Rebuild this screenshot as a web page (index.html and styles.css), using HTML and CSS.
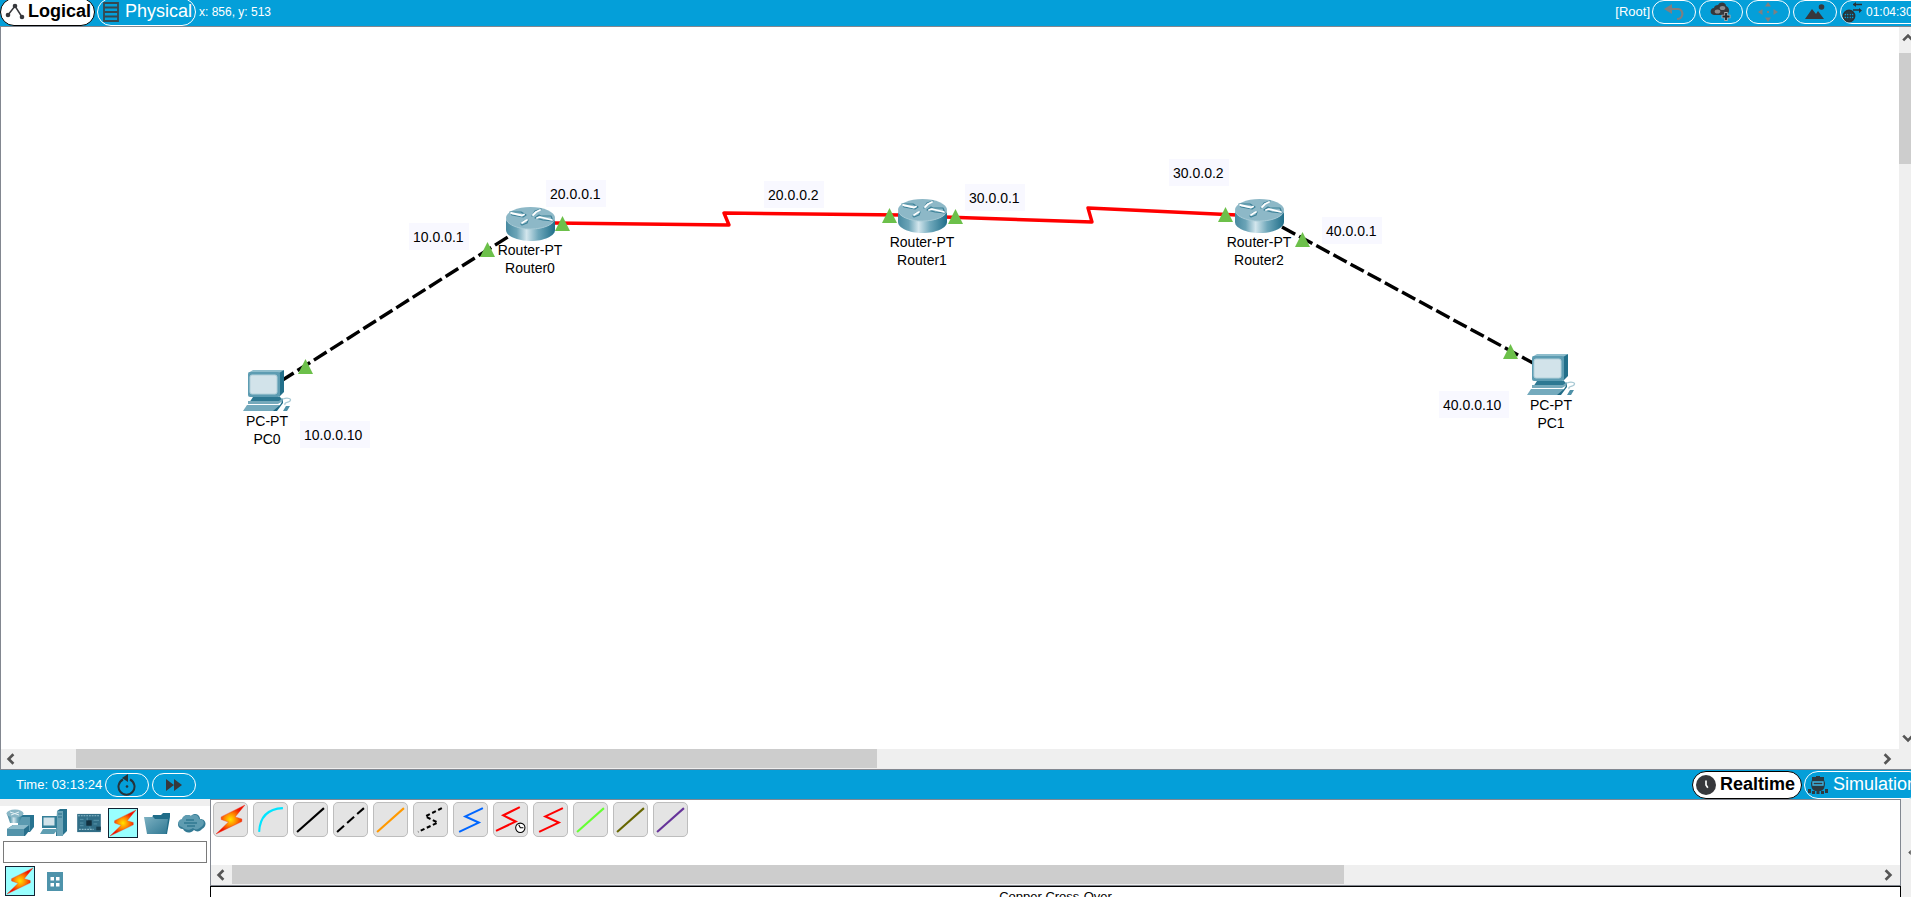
FILE: index.html
```html
<!DOCTYPE html>
<html lang="en">
<head>
<meta charset="utf-8">
<title>Network topology</title>
<link rel="stylesheet" href="styles.css">
</head>
<body>
<svg class="defs" aria-hidden="true">
  <defs>
    <linearGradient id="side" x1="0" x2="1" y1="0" y2="0">
      <stop offset="0" stop-color="#4789a0"/><stop offset=".22" stop-color="#6ba4b7"/><stop offset=".42" stop-color="#d3e6ed"/><stop offset=".66" stop-color="#6ea7ba"/><stop offset="1" stop-color="#216f8a"/>
    </linearGradient>
    <linearGradient id="teal" x1="0" x2="1" y1="0" y2="1">
      <stop offset="0" stop-color="#7db1c2"/><stop offset="1" stop-color="#2f7893"/>
    </linearGradient>
    <radialGradient id="fire">
      <stop offset="0" stop-color="#ffe600"/><stop offset=".4" stop-color="#ff8c00"/><stop offset=".9" stop-color="#f01000"/>
    </radialGradient>
    <symbol id="router" viewBox="0 0 49 34">
      <path d="M0 11v12c0 6 11 11 24.500 11S49 29 49 23V11z" fill="url(#side)"/>
      <ellipse cx="24.500" cy="11" rx="24.500" ry="11" fill="#8db8c7"/>
      <path d="M0 11c0 6 11 11 24.500 11S49 17 49 11" fill="none" stroke="#a9cbd6"/>
      <g fill="none" stroke-linecap="round" stroke-linejoin="round">
        <path d="M4 5h11l5 3-3 2-11-2zM29 11l4-3 2 1h10l2 5-10-1zM26 9l3-5 6-2M15 17l3-3 4-1-1 3-5 2z" stroke="#3c8198" stroke-width="1.200"/>
        <path d="M5 6l11 2.500 2-1M31 11l3-1 12 3M27 8l3-3 4-2M16 16l3-2 2-1" stroke="#fff" stroke-width="1.800"/>
      </g>
    </symbol>
    <symbol id="pc" viewBox="0 0 49 41">
      <path d="M5 3l5-3h31l-4 3z" fill="#8ebdcc"/><path d="M36 3l5-3v22l-5 5z" fill="#226f8a"/>
      <rect x="5" y="2" width="32" height="25" rx="2" fill="#5d9cb2"/>
      <rect x="7" y="5" width="27" height="19" rx="2" fill="#d2e3ea" stroke="#b2d0da"/>
      <path d="M10 27h27l3 3-4 3H6z" fill="#2d7892"/><path d="M5 31h31l4-3v3l-5 3H5z" fill="#75a9bb"/>
      <path d="M4 35h33l-4 6H0z" fill="#74aabd"/><path d="M37 35l3-5v3l-6 8h-4z" fill="#1f6a85"/>
      <path d="M40 29c5-2 9 0 7 2-2 2-6 1-5 4" fill="none" stroke="#a8c9d4" stroke-width="1.300"/><path d="M43 36h4l-3 5h-4z" fill="#4f91a8"/>
    </symbol>
    <symbol id="bolt" viewBox="0 0 30 30">
      <path d="M29 1L6 12.500v2.500l7 2.500L1 29l25-12v-2.500L19.500 12.500z" fill="url(#fire)" stroke="#f03020" stroke-width=".4"/>
    </symbol>
    <symbol id="chev" viewBox="0 0 10 10"><path d="M7 1L3 5l4 4" fill="none" stroke="#555" stroke-width="2.200"/></symbol>
  </defs>
</svg>

<div class="app">
  <header class="bar topbar">
    <button class="tab tab-active tab-logical" type="button">
      <svg width="20" height="18" viewBox="0 0 20 18"><path d="M3 12L10 3l7 11" fill="none" stroke="#37383c" stroke-width="1.500"/><circle cx="3" cy="12" r="2.300" fill="#37383c"/><circle cx="10" cy="3" r="2.300" fill="#37383c"/><circle cx="17" cy="14" r="2.300" fill="#37383c"/></svg>
      Logical
    </button>
    <button class="tab tab-physical" type="button">
      <svg width="16" height="20" viewBox="0 0 16 20"><path d="M1 1h14v18H1zM1 5.500h14M1 10h14M1 14.500h14" fill="none" stroke="#37484f" stroke-width="1.800"/></svg>
      Physical
    </button>
    <span class="coords">x: 856, y: 513</span>
    <div class="top-actions">
      <span class="root">[Root]</span>
      <button class="pill" type="button" aria-label="Back"><svg width="22" height="18" viewBox="0 0 22 18"><path d="M7 6h8c6 0 6 10-1 10" fill="none" stroke="#7f7f80" stroke-width="2.200"/><path d="M1 6l8-5v10z" fill="#7f7f80"/></svg></button>
      <button class="pill" type="button" aria-label="New cluster"><svg width="22" height="20" viewBox="0 0 22 20"><path d="M4 13c-5-1-4-7 0-7 0-2 2-3 4-3 2-4 8-3 8 1 4 1 4 8 0 9z" fill="#37383c"/><g fill="#8c8c8e"><ellipse cx="7.500" cy="9.500" rx="2.800" ry="2"/><ellipse cx="12.500" cy="6" rx="2.800" ry="2"/></g><path d="M16 10v9M11.500 14.500h9" stroke="#a9a9aa" stroke-width="3.500"/><path d="M16 11v7M12.500 14.500h7" stroke="#26272a" stroke-width="1.800"/></svg></button>
      <button class="pill" type="button" aria-label="Move object"><svg width="20" height="20" viewBox="0 0 20 20"><path d="M10 0l3 4.500H7zM10 20l3-4.500H7zM0 10l4.500-3v6zM20 10l-4.500-3v6zM9 9h2v2H9z" fill="#7f7f80"/></svg></button>
      <button class="pill" type="button" aria-label="Background"><svg width="20" height="18" viewBox="0 0 20 18"><path d="M0 16L7 6l4 5 2-3 6 8z" fill="#37383c"/><circle cx="16.500" cy="4" r="2.800" fill="#37383c"/></svg></button>
      <button class="pill pill-clock" type="button"><svg width="21" height="22" viewBox="0 0 21 22"><circle cx="7" cy="15" r="5.500" fill="none" stroke="#2b3135" stroke-width="1.800"/><ellipse cx="7" cy="15" rx="2.500" ry="5.500" fill="none" stroke="#2b3135"/><path d="M1 15h12M2 12h10M2 18h10M7 9v12M20 3.500h-9M11 9h7" stroke="#2b3135" stroke-width="1.400"/><path d="M11 3.500l3-2.500v5zM20 9.500l-3-2.500v5z" fill="#2b3135"/></svg>01:04:30</button>
    </div>
  </header>

  <main class="workspace">
    <div class="canvas">
      <svg class="links" width="100%" height="100%">
        <g fill="none" stroke="#f00" stroke-width="3.400" stroke-linejoin="round">
          <path d="M552 196L728 198 723 186 900 188"/><path d="M943 190L1091 195 1087 181 1236 188"/>
        </g>
        <g fill="none" stroke="#000" stroke-width="3.400" stroke-dasharray="15 4.500">
          <path d="M280 354L510 208"/><path d="M1281 200L1532 336"/>
        </g>
      </svg>

      <div class="node" style="left:479px;top:180px"><svg width="49" height="34"><use href="#router"/></svg><span>Router-PT<br>Router0</span></div>
      <div class="node" style="left:871px;top:172px"><svg width="49" height="34"><use href="#router"/></svg><span>Router-PT<br>Router1</span></div>
      <div class="node" style="left:1208px;top:172px"><svg width="49" height="34"><use href="#router"/></svg><span>Router-PT<br>Router2</span></div>
      <div class="node node-pc" style="left:216px;top:343px"><svg width="49" height="41"><use href="#pc"/></svg><span>PC-PT<br>PC0</span></div>
      <div class="node node-pc" style="left:1500px;top:327px"><svg width="49" height="41"><use href="#pc"/></svg><span>PC-PT<br>PC1</span></div>

      <svg class="links" width="100%" height="100%"><g fill="#6cc04a">
        <path d="M554 204l7.500-15 7.500 15z"/><path d="M479 230l7.500-15 7.500 15z"/>
        <path d="M881 196l7.500-15 7.500 15z"/><path d="M947 197l7.500-15 7.500 15z"/>
        <path d="M1217 195l7.500-15 7.500 15z"/><path d="M1294 220l7.500-15 7.500 15z"/>
        <path d="M297 347l7.500-15 7.500 15z"/><path d="M1502 332l7.500-15 7.500 15z"/>
      </g></svg>

      <span class="note" style="left:545px;top:153px">20.0.0.1</span>
      <span class="note" style="left:408px;top:196px">10.0.0.1</span>
      <span class="note" style="left:763px;top:154px">20.0.0.2</span>
      <span class="note" style="left:964px;top:157px">30.0.0.1</span>
      <span class="note" style="left:1168px;top:132px">30.0.0.2</span>
      <span class="note" style="left:1321px;top:190px">40.0.0.1</span>
      <span class="note note-wide" style="left:299px;top:394px">10.0.0.10</span>
      <span class="note note-wide" style="left:1438px;top:364px">40.0.0.10</span>
    </div>
    <div class="vscroll">
      <svg class="chev up" width="12" height="12"><use href="#chev"/></svg>
      <div class="vthumb"></div>
      <svg class="chev down" width="12" height="12"><use href="#chev"/></svg>
    </div>
    <div class="hscroll">
      <svg class="chev" width="12" height="12"><use href="#chev"/></svg>
      <div class="hthumb"></div>
      <svg class="chev right" width="12" height="12"><use href="#chev"/></svg>
    </div>
  </main>

  <div class="bar timebar">
    <span class="time">Time: 03:13:24</span>
    <button class="pill" type="button" aria-label="Power cycle devices"><svg width="20" height="22" viewBox="0 0 20 22"><path d="M6 5.500a8 8 0 1 0 7 0" fill="none" stroke="#26333a" stroke-width="2"/><path d="M5 4l6-4v8z" fill="#26333a"/><circle cx="10" cy="12.500" r="1.300" fill="#26333a"/></svg></button>
    <button class="pill" type="button" aria-label="Fast forward"><svg width="18" height="14" viewBox="0 0 18 14"><path d="M1 1l8 6-8 6zM9 1l8 6-8 6z" fill="#37383c"/></svg></button>
    <div class="modes">
      <button class="tab tab-active tab-realtime" type="button"><svg width="20" height="20" viewBox="0 0 22 22"><circle cx="11" cy="11" r="11" fill="#37383c"/><path d="M11 6v5l2 3" fill="none" stroke="#fff" stroke-width="1.800"/></svg>Realtime</button>
      <button class="tab tab-sim" type="button"><svg width="20" height="20" viewBox="0 0 20 20"><path d="M8 1h4v1h4v3l1 3c0 5-2 8-5 8H8c-3 0-5-3-5-8l1-3V2h4z" fill="#2c3940"/><path d="M5 7h10v3H5z" fill="#37383c" stroke="#3db5e4" stroke-width="1.300"/><path d="M0 14h3v4H0zM4 16h3v3H4zM8.500 16h3v3h-3zM13 16h3v3h-3zM17 14h3v4h-3z" fill="#2c3940"/></svg>Simulation</button>
    </div>
  </div>

  <footer class="dock">
    <section class="palette">
      <div class="cats">
        <button class="cat" type="button" aria-label="Network devices"><svg width="28" height="28" viewBox="0 0 28 28"><path d="M13 8l3-2h12v12l-4 5H13z" fill="#277390"/><path d="M12 8h12v14H12z" fill="#5b9ab0"/><path d="M1 5l3 9h9l4-9z" fill="url(#side)"/><ellipse cx="9" cy="4.500" rx="8.500" ry="4" fill="#8ab7c6"/><path d="M4 3l9 3M13 3L5 6" stroke="#e5f1f5"/><path d="M1 20l6-4h16v6l-4 5H1z" fill="#286f8b"/><path d="M1 20l6-4h16l-5 4z" fill="#8dbccb"/><path d="M1 20h17v7H1z" fill="#5393aa"/></svg></button>
        <button class="cat" type="button" aria-label="End devices"><svg width="28" height="28" viewBox="0 0 28 28"><path d="M17 2l3-2h7v22l-5 5h-6z" fill="#26718d"/><path d="M17 2h6v25h-6z" fill="#6ca4b7"/><path d="M18 5h4M18 8h4" stroke="#286f8b"/><rect x="2" y="7" width="15" height="12" fill="#347e98"/><rect x="3.500" y="8.500" width="11" height="8" fill="#d2e3ea"/><path d="M3 20h15l-4 5H0z" fill="#5f9eb2"/></svg></button>
        <button class="cat" type="button" aria-label="Components"><svg width="26" height="20" viewBox="0 0 28 22"><path d="M1 1h26v20H1z" fill="#316e87"/><path d="M2 3h24M3 18h16" stroke="#8dbccb" stroke-width="1.200" stroke-dasharray="2 1"/><path d="M11 8h6v6h-6z" fill="#12303f"/><path d="M4 7h4M4 11h4M4 14h4M19 8h6M19 12h4M12 5v3M15 15v3" stroke="#5d98ad"/><path d="M22 15h5v4h-5z" fill="#173e50"/></svg></button>
        <button class="cat selected" type="button" aria-label="Connections"><svg width="28" height="28"><use href="#bolt"/></svg></button>
        <button class="cat" type="button" aria-label="Miscellaneous"><svg width="27" height="21" viewBox="0 0 27 21"><path d="M9 2h8l2-2h7v4l-3 17H4z" fill="#1f6c88"/><path d="M0 4h9l2 2h13l-2 15H3z" fill="url(#teal)"/></svg></button>
        <button class="cat" type="button" aria-label="Multiuser connection"><svg width="28" height="20" viewBox="0 0 28 20"><path d="M5 16c-6 0-7-8-1-9 1-5 6-6 9-4 4-4 9-1 9 3 7 0 7 8 2 10-2 3-6 3-8 1-4 4-9 3-11-1z" fill="#337a94"/><path d="M4 14c-5-1-5-7 0-8 1-4 6-5 9-3 4-3 8 0 8 3 6 0 6 6 2 8-3 3-6 3-8 1-4 3-8 2-11-1z" fill="#5f9cb1"/><path d="M8 7h8M6 10h13M9 13h8" stroke="#317891" stroke-width="1.300"/></svg></button>
      </div>
      <input class="search" type="text" aria-label="Search devices">
      <div class="cats subcats">
        <button class="cat selected" type="button" aria-label="Connections"><svg width="28" height="28"><use href="#bolt"/></svg></button>
        <button class="cat" type="button" aria-label="Structured cabling"><svg width="16" height="19" viewBox="0 0 16 19"><path d="M0 0h16v19H0z" fill="#4e93ab"/><path d="M3.500 5h3.500v3.500H3.500zM9 5h3.500v3.500H9zM3.500 11h3.500v3.500H3.500zM9 11h3.500v3.500H9z" fill="#fff"/></svg></button>
      </div>
    </section>

    <section class="cables">
      <div class="cable-list">
        <div class="cable-row">
          <button class="cable" type="button" aria-label="Automatic"><svg viewBox="0 0 30 30"><use href="#bolt"/></svg></button>
          <button class="cable" type="button" aria-label="Console"><svg viewBox="0 0 30 30"><path d="M4 27Q5 5 27 4" stroke="#00e5ff"/></svg></button>
          <button class="cable" type="button" aria-label="Copper straight-through"><svg viewBox="0 0 30 30"><path d="M2 27L28 4" stroke="#000"/></svg></button>
          <button class="cable" type="button" aria-label="Copper cross-over"><svg viewBox="0 0 30 30"><path d="M2 27L28 4" stroke="#000" stroke-dasharray="9 4"/></svg></button>
          <button class="cable" type="button" aria-label="Fiber"><svg viewBox="0 0 30 30"><path d="M2 27L28 4" stroke="#ff9900"/></svg></button>
          <button class="cable" type="button" aria-label="Phone"><svg viewBox="0 0 30 30"><path d="M26 4L10 12 22 18 3 27" stroke="#000" stroke-dasharray="4 2.500"/></svg></button>
          <button class="cable" type="button" aria-label="Coaxial"><svg viewBox="0 0 30 30"><path d="M27 4L10 12 23 18 4 27" stroke="#0066ff"/></svg></button>
          <button class="cable" type="button" aria-label="Serial DCE"><svg viewBox="0 0 30 30"><path d="M24 3L8 11 20 17 1 26" stroke="#f00"/><circle cx="24.500" cy="23" r="4.500" fill="#fff" stroke="#000" stroke-width="1"/><path d="M23 20l1.500 3h3" stroke="#000" stroke-width="1"/></svg></button>
          <button class="cable" type="button" aria-label="Serial DTE"><svg viewBox="0 0 30 30"><path d="M27 4L10 12 23 18 4 27" stroke="#f00"/></svg></button>
          <button class="cable" type="button" aria-label="Octal"><svg viewBox="0 0 30 30"><path d="M2 27L28 4" stroke="#66ff33"/></svg></button>
          <button class="cable" type="button" aria-label="IoT custom cable"><svg viewBox="0 0 30 30"><path d="M2 27L28 4" stroke="#666600"/></svg></button>
          <button class="cable" type="button" aria-label="USB"><svg viewBox="0 0 30 30"><path d="M2 27L28 4" stroke="#663399"/></svg></button>
        </div>
        <div class="hscroll">
          <svg class="chev" width="12" height="12"><use href="#chev"/></svg>
          <div class="hthumb hthumb-cables"></div>
          <svg class="chev right" width="12" height="12"><use href="#chev"/></svg>
        </div>
      </div>
      <div class="caption">Copper Cross-Over</div>
    </section>
    <div class="edge"><svg width="3" height="5" viewBox="0 0 4 8"><path d="M4 0L0 4l4 4z" fill="#555"/></svg></div>
  </footer>
</div>
</body>
</html>
```

FILE: styles.css
```css
* { box-sizing: border-box; }

body {
  margin: 0;
  overflow: hidden;
  background: #fff;
  color: #000;
  font-family: "Liberation Sans", Arial, sans-serif;
}

button {
  margin: 0;
  padding: 0;
  border: 0;
  background: none;
  color: inherit;
  font: inherit;
}

svg { display: block; flex: none; }
.defs { position: absolute; width: 0; height: 0; }

.app {
  display: grid;
  grid-template-rows: 26px minmax(0, 1fr) 29px 98px;
  height: 100vh;
  overflow: hidden;
}

.bar {
  display: flex;
  align-items: center;
  min-width: 0;
  background: #049fd9;
  color: #fff;
  font-size: 13px;
  white-space: nowrap;
}

.topbar { padding-bottom: 3px; }

.tab {
  display: flex;
  align-items: center;
  flex: none;
  height: 28px;
  border: 1px solid #fff;
  border-radius: 14px;
  color: #fff;
  font-size: 18px;
}

.tab-active {
  border-color: #000;
  background: #fff;
  color: #000;
  font-weight: bold;
}

.tab-logical { width: 95px; padding-left: 4px; gap: 3px; }
.tab-physical { width: 99px; margin-left: 2px; padding-left: 5px; gap: 6px; }
.coords { margin-left: 3px; font-size: 12px; }

.top-actions {
  display: flex;
  align-items: center;
  gap: 3px;
  margin-left: auto;
  margin-right: -29px;
}

.root { margin-right: -1px; }

.pill {
  display: flex;
  align-items: center;
  justify-content: center;
  flex: none;
  width: 44px;
  height: 24px;
  border: 1px solid #fff;
  border-radius: 12px;
}

.pill-clock {
  width: 100px;
  justify-content: flex-start;
  padding-left: 1px;
  gap: 3px;
  font-size: 12px;
}

.workspace {
  display: grid;
  grid-template-columns: minmax(0, 1fr) 12px;
  grid-template-rows: minmax(0, 1fr) 20px;
  border: 1px solid #828790;
  border-right: 0;
}

.canvas { position: relative; overflow: hidden; background: #fff; }
.links { position: absolute; inset: 0; }

.node {
  position: absolute;
  display: flex;
  flex-direction: column;
  align-items: center;
  width: 100px;
  font-size: 14px;
  line-height: 18px;
  text-align: center;
}

.node-pc { gap: 1px; }

.note {
  position: absolute;
  width: 60px;
  padding: 1px 0 0 4px;
  background: #f8f8ff;
  font-size: 14px;
  line-height: 26px;
}

.note-wide { width: 70px; }

.vscroll {
  display: flex;
  flex-direction: column;
  background: #efefef;
}

.vscroll .chev { margin-left: 3px; }
.up { margin-top: 5px; transform: rotate(90deg); }
.down { margin-top: auto; margin-bottom: 5px; transform: rotate(-90deg); }
.vthumb { height: 111px; margin-top: 9px; background: #cdcdcd; }

.hscroll {
  display: flex;
  align-items: center;
  height: 20px;
  padding-left: 4px;
  background: #efefef;
}

.workspace .hscroll { grid-column: 1 / -1; }
.hthumb { width: 42%; height: 19px; margin-left: 59px; align-self: flex-start; background: #cdcdcd; }
.right { margin-left: auto; margin-right: 18px; transform: rotate(180deg); }

.timebar { padding-left: 16px; gap: 3px; }
.modes { display: flex; gap: 2px; margin-left: auto; margin-right: -12px; }
.tab-realtime { width: 110px; padding-left: 3px; gap: 4px; }
.tab-sim { width: 119px; padding-left: 3px; gap: 5px; }

.dock {
  display: grid;
  grid-template-columns: 210px minmax(0, 1fr) 10px;
  background: #fff;
}

.palette { border-top: 7px solid #efefef; min-width: 0; }

.cats {
  display: flex;
  align-items: center;
  gap: 5px;
  padding: 2px 3px 3px 5px;
}

.cat {
  display: flex;
  align-items: center;
  justify-content: center;
  width: 30px;
  height: 30px;
}

.selected { border: 1px solid #123; background: #99ffff; }

.search {
  display: block;
  width: 204px;
  height: 22px;
  margin-left: 3px;
  border: 1px solid #7a7a7a;
  background: #fff;
}

.subcats { padding-top: 3px; }

.cables { display: flex; flex-direction: column; min-width: 0; }

.cable-list {
  display: flex;
  flex-direction: column;
  justify-content: space-between;
  height: 87px;
  border: 1px solid #828790;
}

.cable-row { display: flex; gap: 5px; padding: 2px; }

.cable {
  width: 35px;
  height: 35px;
  padding: 1px;
  border: 1px solid #bdbdbd;
  border-radius: 5px;
  background: #e4e4e4;
}

.cable svg { width: 31px; height: 31px; fill: none; stroke-width: 2; }
.hthumb-cables { width: 66%; margin-left: 5px; }
.cables .right { margin-right: 6px; }

.caption {
  flex: 1;
  min-height: 0;
  overflow: hidden;
  padding-top: 1px;
  border: 1px solid #000;
  border-bottom: 0;
  font-size: 13px;
  line-height: 17px;
  text-align: center;
}

.edge {
  display: flex;
  align-items: center;
  justify-content: flex-end;
  background: #efefef;
}
```
